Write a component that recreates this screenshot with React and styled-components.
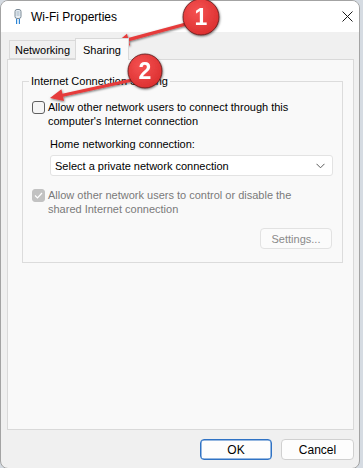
import styled, { createGlobalStyle } from 'styled-components'

const GlobalStyle = createGlobalStyle`
  html, body {
    margin: 0;
    padding: 0;
    background: #d5dbe2;
  }
  body {
    font-family: "Segoe UI", "Liberation Sans", Arial, sans-serif;
    font-size: 11px;
    color: #000;
  }
`

const Stage = styled.div`
  position: relative;
  width: 363px;
  height: 468px;
  overflow: hidden;
`

const Window = styled.div`
  width: 360px;
  height: 469px;
  box-sizing: border-box;
  border: 1px solid #a3a3a3;
  border-radius: 8px;
  overflow: hidden;
  display: flex;
  flex-direction: column;
  background: #f0f0f0;
`

const TitleBar = styled.div`
  height: 31px;
  flex-shrink: 0;
  background: #ffffff;
  display: flex;
  align-items: center;
  padding: 0 0 0 13px;
`

const Title = styled.span`
  margin-left: 9px;
  font-size: 12px;
  flex: 1;
`

const CloseBtn = styled.div`
  width: 24px;
  height: 31px;
  display: flex;
  align-items: center;
  justify-content: center;
`

const Body = styled.div`
  flex: 1;
  display: flex;
  flex-direction: column;
  padding: 6px 5px 0 6px;
`

const TabStrip = styled.div`
  display: flex;
  align-items: flex-end;
  padding-left: 2px;
  height: 21px;
  position: relative;
  z-index: 1;
`

const Tab = styled.div`
  box-sizing: border-box;
  height: ${(p) => (p.$active ? '22px' : '19px')};
  margin-bottom: ${(p) => (p.$active ? '-1px' : '0')};
  padding: 0 ${(p) => (p.$active ? '7px' : '5px')};
  display: flex;
  align-items: center;
  border: 1px solid #d9d9d9;
  border-bottom: ${(p) => (p.$active ? 'none' : '1px solid #d9d9d9')};
  background: ${(p) => (p.$active ? '#f9f9f9' : '#f0f0f0')};
  margin-left: ${(p) => (p.$active ? '-1px' : '0')};
`

const Panel = styled.div`
  box-sizing: border-box;
  height: 371px;
  border: 1px solid #d9d9d9;
  background: #f9f9f9;
  padding: 0 10px 0 14px;
`

const Group = styled.fieldset`
  margin: 14px 0 0 0;
  padding: 0 10px 13px 9px;
  border: 1px solid #dcdcdc;
  min-width: 0;
`

const Legend = styled.legend`
  padding: 0 2px;
  margin-left: -3px;
  line-height: 14px;
`

const CheckRow = styled.div`
  display: flex;
  align-items: flex-start;
  margin-top: ${(p) => p.$top}px;
  color: ${(p) => (p.$disabled ? '#7a7a7a' : '#000')};
  line-height: 14px;
`

const Box = styled.span`
  box-sizing: border-box;
  flex-shrink: 0;
  width: 13px;
  height: 13px;
  margin-top: 1px;
  margin-right: 3px;
  border-radius: 3px;
  border: 1px solid ${(p) => (p.$checked ? '#c2c2c2' : '#5f5f5f')};
  background: ${(p) => (p.$checked ? '#c2c2c2' : '#f5f5f5')};
  display: flex;
  align-items: center;
  justify-content: center;
`

const Indent = styled.div`
  margin-left: 18px;
`

const Label = styled.div`
  margin-top: 9px;
  line-height: 14px;
`

const Select = styled.div`
  box-sizing: border-box;
  margin-top: 4px;
  width: 283px;
  height: 21px;
  border: 1px solid #e3e3e3;
  border-radius: 3px;
  background: #ffffff;
  display: flex;
  align-items: center;
  justify-content: space-between;
  padding: 0 7px 0 4px;
`

const ButtonRow = styled.div`
  display: flex;
  justify-content: flex-end;
  gap: 9px;
  margin-top: ${(p) => p.$top || 0}px;
`

const Button = styled.div`
  box-sizing: border-box;
  width: ${(p) => p.$w}px;
  height: 21px;
  border-radius: 4px;
  display: flex;
  align-items: center;
  justify-content: center;
  font-size: ${(p) => (p.$disabled ? '11px' : '12px')};
  background: ${(p) => (p.$disabled ? '#fbfbfb' : '#fdfdfd')};
  color: ${(p) => (p.$disabled ? '#8a8a8a' : '#000')};
  border: 1px solid ${(p) => (p.$primary ? '#2f72c4' : p.$disabled ? '#e2e2e2' : '#d0d0d0')};
  box-shadow: ${(p) => (p.$primary ? 'inset 0 0 0 0.5px #2f72c4' : 'none')};
`

const Footer = styled(ButtonRow)`
  margin-top: 9px;
`

const Overlay = styled.svg`
  position: absolute;
  left: 0;
  top: 0;
  pointer-events: none;
`

function AdapterIcon() {
  return (
    <svg width="8" height="15" viewBox="0 0 8 15">
      <rect x="1" y="0.5" width="6" height="9" rx="2" fill="#e8eef3" stroke="#7b8a96" />
      <rect x="2.5" y="2" width="3" height="5" fill="#c4d0da" />
      <rect x="2" y="10" width="1.2" height="5" fill="#2e86d6" />
      <rect x="4.8" y="10" width="1.2" height="5" fill="#2e86d6" />
    </svg>
  )
}

function Badge({ cx, cy, r, n }) {
  return (
    <g filter="url(#shadow)">
      <circle cx={cx} cy={cy} r={r} fill="url(#red)" stroke="#5a1a1a" strokeWidth="0.8" />
      <text
        x={cx}
        y={cy + 8}
        textAnchor="middle"
        fontFamily="'Liberation Sans', Arial, sans-serif"
        fontWeight="bold"
        fontSize="23"
        fill="#ffffff"
      >
        {n}
      </text>
    </g>
  )
}

function Arrow({ x1, y1, x2, y2 }) {
  const ang = Math.atan2(y2 - y1, x2 - x1)
  const len = 13
  const half = 6
  const bx = x2 - len * Math.cos(ang)
  const by = y2 - len * Math.sin(ang)
  const px = -Math.sin(ang) * half
  const py = Math.cos(ang) * half
  return (
    <g filter="url(#shadow)">
      <line x1={x1} y1={y1} x2={bx} y2={by} stroke="#e63b3b" strokeWidth="3.2" strokeLinecap="round" />
      <polygon points={`${x2},${y2} ${bx + px},${by + py} ${bx - px},${by - py}`} fill="#e63b3b" />
    </g>
  )
}

export default function App() {
  return (
    <>
      <GlobalStyle />
      <Stage>
        <Window>
          <TitleBar>
            <AdapterIcon />
            <Title>Wi-Fi Properties</Title>
            <CloseBtn>
              <svg width="11" height="11" viewBox="0 0 11 11">
                <path d="M0.5 0.5 L10.5 10.5 M10.5 0.5 L0.5 10.5" stroke="#1a1a1a" strokeWidth="1" />
              </svg>
            </CloseBtn>
          </TitleBar>
          <Body>
            <TabStrip>
              <Tab>Networking</Tab>
              <Tab $active>Sharing</Tab>
            </TabStrip>
            <Panel>
              <Group>
                <Legend>Internet Connection Sharing</Legend>
                <CheckRow $top={12}>
                  <Box />
                  <span>
                    Allow other network users to connect through this
                    <br />
                    computer's Internet connection
                  </span>
                </CheckRow>
                <Indent>
                  <Label>Home networking connection:</Label>
                  <Select>
                    <span>Select a private network connection</span>
                    <svg width="9" height="6" viewBox="0 0 9 6">
                      <path d="M0.5 0.8 L4.5 4.8 L8.5 0.8" fill="none" stroke="#5a5a5a" strokeWidth="1" />
                    </svg>
                  </Select>
                </Indent>
                <CheckRow $top={12} $disabled>
                  <Box $checked>
                    <svg width="9" height="7" viewBox="0 0 9 7">
                      <path d="M1 3.5 L3.5 6 L8 1" fill="none" stroke="#ffffff" strokeWidth="1.2" />
                    </svg>
                  </Box>
                  <span>
                    Allow other network users to control or disable the
                    <br />
                    shared Internet connection
                  </span>
                </CheckRow>
                <ButtonRow $top={12}>
                  <Button $w={72} $disabled>Settings...</Button>
                </ButtonRow>
              </Group>
            </Panel>
            <Footer>
              <Button $w={72} $primary>OK</Button>
              <Button $w={73}>Cancel</Button>
            </Footer>
          </Body>
        </Window>
        <Overlay width="363" height="468" viewBox="0 0 363 468">
          <defs>
            <radialGradient id="red" cx="0.4" cy="0.35" r="0.75">
              <stop offset="0" stopColor="#f55252" />
              <stop offset="1" stopColor="#d92c2c" />
            </radialGradient>
            <filter id="shadow" x="-30%" y="-30%" width="160%" height="160%">
              <feDropShadow dx="0.5" dy="1" stdDeviation="1" floodColor="#000" floodOpacity="0.55" />
            </filter>
          </defs>
          <Arrow x1={186} y1={24} x2={116} y2={43} />
          <Badge cx={201} cy={17} r={18} n="1" />
          <Arrow x1={132} y1={80} x2={50} y2={98} />
          <Badge cx={145} cy={71} r={17} n="2" />
        </Overlay>
      </Stage>
    </>
  )
}
